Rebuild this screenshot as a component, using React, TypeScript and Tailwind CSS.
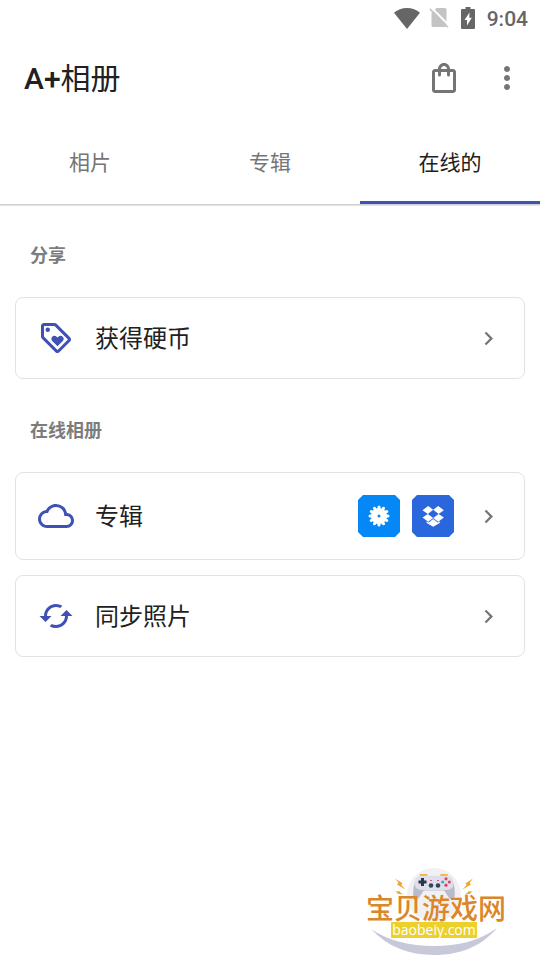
import type { ReactNode } from "react";
import {
  MdCached,
  MdChevronRight,
  MdCloudQueue,
  MdMoreVert,
  MdOutlineLoyalty,
  MdOutlineShoppingBag,
} from "react-icons/md";

const TABS = ["相片", "专辑", "在线的"];
const ACTIVE_TAB = "在线的";

function StatusBar() {
  return (
    <div className="flex h-9 items-center justify-end pr-3 text-[#666666]">
      <svg viewBox="0 0 26 21" className="h-[21px] w-[26px]" fill="currentColor" aria-hidden="true">
        <path d="M13 21 0 4.7C3.500 1.700 8 0 13 0s9.500 1.700 13 4.700z" />
      </svg>
      <svg viewBox="0 0 20 20" className="ml-[9px] h-5 w-5" aria-hidden="true">
        <path d="M7.500 0H16a1.500 1.500 0 0 1 1.500 1.500v16A1.500 1.500 0 0 1 16 19H4a1.500 1.500 0 0 1-1.500-1.500V5z" fill="#c4c4c4" />
        <path d="M2.200-.6 20.500 18" stroke="#fff" strokeWidth="2" />
        <path d="M.8.900 19 19.200" stroke="#c4c4c4" strokeWidth="1.600" />
      </svg>
      <svg viewBox="0 0 14 22" className="ml-3 h-[22px] w-3.5" aria-hidden="true">
        <path d="M4.500 0h5v2H13a1 1 0 0 1 1 1v18a1 1 0 0 1-1 1H1a1 1 0 0 1-1-1V3a1 1 0 0 1 1-1h3.500z" fill="currentColor" />
        <path d="M8.500 5.500 3.500 13H6v5.500l4.800-7.800H8.300z" fill="#fff" />
      </svg>
      <span className="ml-3 pt-0.5 text-[21px] leading-6 font-medium">9:04</span>
    </div>
  );
}

function Toolbar() {
  return (
    <header className="flex h-21 items-center justify-between pr-[15px] pl-6">
      <h1 className="pt-0.5 text-[30px] leading-9 font-normal text-[#212121]">
        <span className="font-medium">A+</span>相册
      </h1>
      <div className="flex gap-[27px] text-[#757575]">
        <button type="button" aria-label="商店">
          <MdOutlineShoppingBag className="size-9" />
        </button>
        <button type="button" aria-label="更多">
          <MdMoreVert className="size-9" />
        </button>
      </div>
    </header>
  );
}

function Tabs() {
  return (
    <nav role="tablist" className="flex h-21 shadow-[0_1px_0_#cfcfcf,0_2px_0_#e4e4e4]">
      {TABS.map((tab) => (
        <button
          key={tab}
          type="button"
          role="tab"
          aria-selected={tab === ACTIVE_TAB}
          className={
            tab === ACTIVE_TAB
              ? "flex-1 border-y-3 border-t-transparent border-b-[#3f51b5] pt-1 text-[21px] text-[#212121]"
              : "flex-1 border-y-3 border-transparent pt-1 text-[21px] text-[#757575]"
          }
        >
          {tab}
        </button>
      ))}
    </nav>
  );
}

function SectionTitle({ children }: { children: ReactNode }) {
  return <h2 className="px-[15px] pt-[38px] pb-7 text-lg leading-[27px] font-bold text-[#7c7c7c]">{children}</h2>;
}

function Row({ icon, label, children }: { icon: ReactNode; label: string; children?: ReactNode }) {
  return (
    <button
      type="button"
      className="flex w-full items-center rounded-lg border border-[#e2e2e2] p-[22px] text-left"
    >
      <span className="text-[#3f51b5]">{icon}</span>
      <span className="ml-[21px] flex-1 pt-0.5 text-2xl leading-8 text-[#212121]">{label}</span>
      {children}
      <MdChevronRight className="ml-[21px] size-[27px] text-[#757575]" aria-hidden="true" />
    </button>
  );
}

// small gear tile, twelve rounded teeth around a disc
function GearTile() {
  return (
    <svg viewBox="0 0 42 42" className="size-[42px]" aria-hidden="true">
      <path d="M5 0h32l5 5v32l-5 5H5l-5-5V5z" fill="#0588f5" />
      <circle cx="21" cy="21" r="8" fill="#fff" />
      <g stroke="#fff" strokeWidth="3" strokeLinecap="round">
        {[0, 30, 60, 90, 120, 150].map((deg) => (
          <path key={deg} d="M21 12v18" transform={`rotate(${deg} 21 21)`} />
        ))}
      </g>
      <circle cx="21" cy="21" r="1.500" fill="#0588f5" />
    </svg>
  );
}

function DropboxTile() {
  return (
    <svg viewBox="0 0 42 42" className="size-[42px]" aria-hidden="true">
      <path d="M5 0h32l5 5v32l-5 5H5l-5-5V5z" fill="#2a66dc" />
      <g fill="#fff">
        <path d="m16.200 11 5 3.800-5.400 4.200-5.300-3.800z" />
        <path d="m26.200 11 5.700 4.200-5.300 3.800-5.400-4.200z" />
        <path d="m15.800 19 5.400 4-5 3.700-5.700-4.200z" />
        <path d="m26.600 19 5.300 3.500-5.700 4.200-5-3.700z" />
        <path d="m21.200 24 4.500 3.500 2-1.200v1.700l-6.500 3.700-6.500-3.700v-1.700l2 1.200z" />
      </g>
    </svg>
  );
}

function SiteBadge() {
  return (
    <svg viewBox="0 0 165 100" className="absolute right-5 bottom-0 h-[100px] w-[165px]" role="img" aria-label="宝贝游戏网">
      <circle cx="79" cy="35" r="27" fill="#f1f1f3" />
      {/* gamepad */}
      <path d="M65.500 15h6M86 15h6" stroke="#f0b24a" strokeWidth="2" strokeLinecap="round" />
      <path
        d="M66 17h26c5 0 7 6 7.500 11 .5 6 .5 11-1.500 12-3 1-6-6-9-9.500H69c-3 3.500-6 10.500-9 9.500-2-1-2-6-1.500-12C59 23 61 17 66 17z"
        fill="#b9bacb"
      />
      <path d="M66 15.800h26c4.500 0 6.500 4.200 6.500 8s-3 6.200-7 6.200H67c-4 0-7.500-2.400-7.500-6.200s2-8 6.500-8z" fill="#dfdfeb" />
      <path d="M67.500 18v8M63.500 22h8" stroke="#26384a" strokeWidth="3" />
      <circle cx="91" cy="18.800" r="1.600" fill="#e0455a" />
      <circle cx="91" cy="25.200" r="1.600" fill="#e0455a" />
      <circle cx="87.700" cy="22" r="1.600" fill="#38aabb" />
      <circle cx="94.300" cy="22" r="1.600" fill="#e0455a" />
      <circle cx="76" cy="25.500" r="2.300" fill="#33445a" />
      <circle cx="83" cy="25.500" r="2.300" fill="#33445a" />
      <path d="M75 20.500h2M82 20.500h2" stroke="#d85b6b" strokeWidth="1.200" />
      {/* sparks */}
      <g fill="#f0a52b">
        <path d="m40 18.500 7.500 4.700-1.200 1.800 4.200 4.500-8.500-5 1.500-1.800z" />
        <path d="m118 18.500-7.500 4.700 1.200 1.800-4.200 4.500 8.500-5-1.500-1.800z" />
        <path d="m40 31.500 5-.2.300 1.200 3 2-5.800-.8-.2-1z" />
        <path d="m118 31.500-5-.2-.3 1.200-3 2 5.800-.8.200-1z" />
      </g>
      <path d="M16 69c17 18 38 26 63 26s47-8 63-27c-18 13-39 18-63 18s-45-5-63-17z" fill="#c7c8d8" />
      <text x="11" y="59" fontSize="28" fill="#dc862a" className="font-['Noto_Sans_CJK_SC',sans-serif] font-medium">
        宝贝游戏网
      </text>
      <path d="M36 62h86v16H36z" fill="#ecd02c" />
      <text x="79" y="75" textAnchor="middle" fontSize="14" fill="#fff" className="font-['Open_Sans',sans-serif]">
        baobeiy.com
      </text>
    </svg>
  );
}

export default function App() {
  return (
    <div className="relative min-h-screen bg-white font-[Roboto,'Noto_Sans_CJK_SC',sans-serif]">
      <StatusBar />
      <Toolbar />
      <Tabs />
      <main className="px-[15px]">
        <SectionTitle>分享</SectionTitle>
        <Row icon={<MdOutlineLoyalty className="size-9" />} label="获得硬币" />
        <SectionTitle>在线相册</SectionTitle>
        <div className="flex flex-col gap-[15px]">
          <Row icon={<MdCloudQueue className="size-9" />} label="专辑">
            <span className="flex gap-3">
              <GearTile />
              <DropboxTile />
            </span>
          </Row>
          <Row icon={<MdCached className="size-9" />} label="同步照片" />
        </div>
      </main>
      <SiteBadge />
    </div>
  );
}
